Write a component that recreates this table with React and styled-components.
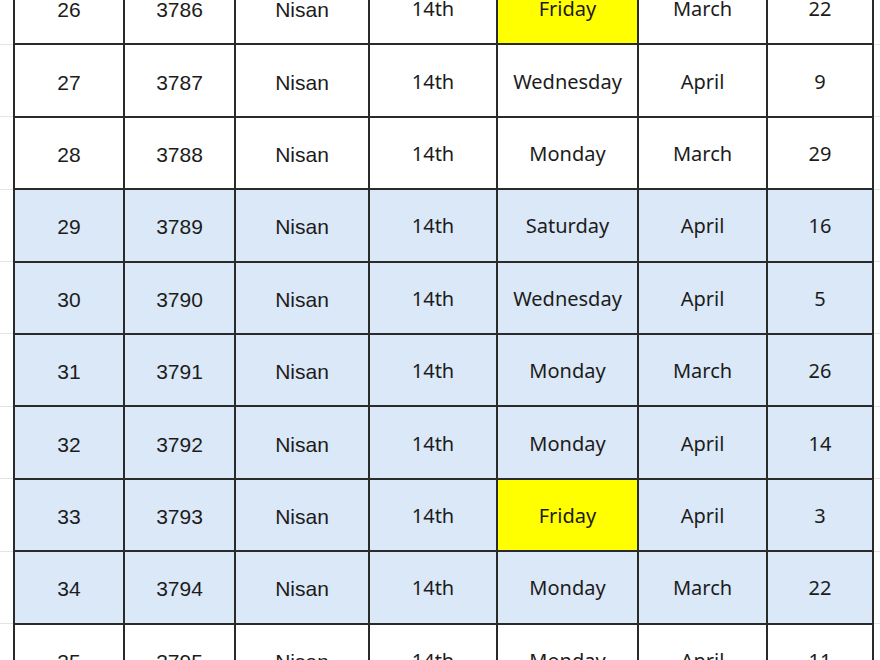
import React from "react";
import styled, { createGlobalStyle } from "styled-components";

const GlobalStyle = createGlobalStyle`
  html, body {
    margin: 0;
    padding: 0;
    background: #ffffff;
    overflow: hidden;
  }
`;

const rows = [
  { n: 26, year: 3786, day: "Friday", month: "March", date: 22, friday: true },
  { n: 27, year: 3787, day: "Wednesday", month: "April", date: 9 },
  { n: 28, year: 3788, day: "Monday", month: "March", date: 29 },
  { n: 29, year: 3789, day: "Saturday", month: "April", date: 16, blue: true },
  { n: 30, year: 3790, day: "Wednesday", month: "April", date: 5, blue: true },
  { n: 31, year: 3791, day: "Monday", month: "March", date: 26, blue: true },
  { n: 32, year: 3792, day: "Monday", month: "April", date: 14, blue: true },
  { n: 33, year: 3793, day: "Friday", month: "April", date: 3, blue: true, friday: true },
  { n: 34, year: 3794, day: "Monday", month: "March", date: 22, blue: true },
  { n: 35, year: 3795, day: "Monday", month: "April", date: 11 },
];

const widths = [14, 110, 111, 134, 128, 141, 129, 106];

const Sheet = styled.div`
  width: 880px;
  height: 660px;
  overflow: hidden;
`;

const Table = styled.table`
  border-collapse: collapse;
  table-layout: fixed;
  width: 880px;
  margin-top: -29px;
`;

const Row = styled.tr`
  height: 72.4px;
  background: ${(p) => (p.$blue ? "#dbe8f7" : "#ffffff")};
`;

const Gutter = styled.td`
  padding: 0;
  background: #ffffff;
  border-bottom: 1px solid #e4e4e4;
`;

const Cell = styled.td`
  padding: ${(p) => (p.$arial ? "4px 0 0" : "1px 0 0")};
  border: 2px solid #2a2a2a;
  text-align: center;
  vertical-align: middle;
  color: #1c1c1c;
  font-size: ${(p) => (p.$arial ? "21px" : "20px")};
  font-family: ${(p) =>
    p.$arial
      ? `"Liberation Sans", Arial, sans-serif`
      : `"Noto Sans", "Open Sans", sans-serif`};
  background: ${(p) => (p.$yellow ? "#ffff00" : "transparent")};
`;

export default function App() {
  return (
    <Sheet>
      <GlobalStyle />
      <Table>
        <colgroup>
          {widths.map((w, i) => (
            <col key={i} style={{ width: w }} />
          ))}
          <col />
        </colgroup>
        <tbody>
          {rows.map((r) => (
            <Row key={r.n} $blue={r.blue}>
              <Gutter />
              <Cell $arial>{r.n}</Cell>
              <Cell $arial>{r.year}</Cell>
              <Cell $arial>Nisan</Cell>
              <Cell>14th</Cell>
              <Cell $yellow={r.friday}>{r.day}</Cell>
              <Cell>{r.month}</Cell>
              <Cell>{r.date}</Cell>
              <Gutter />
            </Row>
          ))}
        </tbody>
      </Table>
    </Sheet>
  );
}
